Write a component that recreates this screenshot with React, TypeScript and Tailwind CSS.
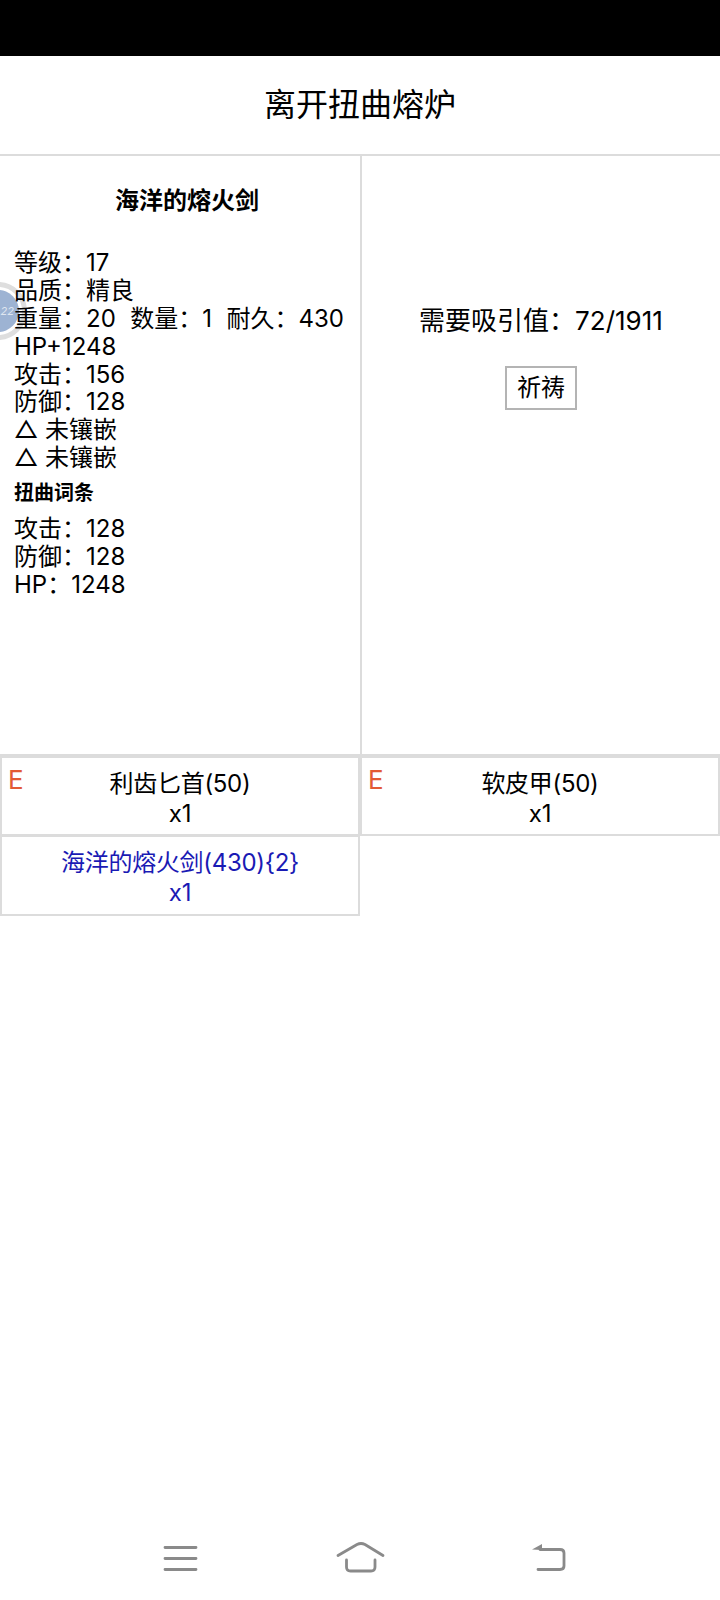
const font = "font-['Inter','Noto_Sans_CJK_SC',sans-serif]";

function Cell({ name, color, e, size }: { name: string; color?: string; e?: boolean; size?: string }) {
  return (
    <div className={`relative border-2 border-[#dcdcdc] text-center text-[24px] tracking-[-0.3px] leading-[30px] pt-[11px] ${size ?? "h-20"} ${color ?? "text-black"}`}>
      {e && <span className="absolute left-[6px] top-[7px] text-[26px] text-[#e25a35]">E</span>}
      <div>{name}</div>
      <div>x1</div>
    </div>
  );
}

function NavBar() {
  return (
    <div className="mt-auto h-20 flex items-start pt-[20px] text-[#8a8a8a]">
      <svg className="ml-[160px]" width="40" height="36" viewBox="160 1540 40 36" fill="none" stroke="currentColor" strokeWidth="2.8" strokeLinecap="round">
        <path d="M165 1547.5H196M165 1558.5H196M165 1569.5H196" />
      </svg>
      <svg className="ml-[135px]" width="54" height="36" viewBox="335 1540 54 36" fill="none" stroke="currentColor" strokeWidth="2.8" strokeLinecap="round" strokeLinejoin="round">
        <path d="M338 1555.5L357 1544.5Q361 1542.5 365 1544.5L383 1555.5" />
        <path d="M346.5 1560V1567Q346.5 1571 350.5 1571H371Q375 1571 375 1567V1560" />
      </svg>
      <svg className="ml-[141px]" width="40" height="36" viewBox="530 1540 40 36" fill="none" stroke="currentColor" strokeWidth="2.8" strokeLinecap="round" strokeLinejoin="round">
        <path d="M540 1549.5H560Q564 1549.5 564 1553V1566Q564 1569.5 560 1569.5H538" />
        <path d="M532 1549.5L542 1544V1550Z" fill="currentColor" stroke="none" />
      </svg>
    </div>
  );
}

export default function App() {
  return (
    <div className={`relative w-[720px] h-[1600px] bg-white overflow-hidden text-black flex flex-col ${font}`}>
      <div className="absolute left-[-31px] top-[282px] w-[58px] h-[58px] rounded-full border-[5px] border-[#dedede] bg-white p-[3px]">
        <div className="w-full h-full rounded-full bg-[#9db3d3] flex items-center justify-end pr-[5px] text-[#dfe6f0] text-[11px] italic">22</div>
      </div>
      <div className="h-14 bg-black shrink-0" />
      <div className="relative h-[100px] shrink-0 flex items-center justify-center text-[32px] border-b-2 border-[#dcdcdc]">离开扭曲熔炉</div>
      <div className="relative flex h-[600px] shrink-0 border-b-2 border-[#dcdcdc]">
        <div className="w-[362px] border-r-2 border-[#dcdcdc] pl-[14px] text-[24px] leading-[27.9px]">
          <div className="text-center font-bold pt-[31px] pb-[34px]">海洋的熔火剑</div>
          <div>等级：17</div>
          <div>品质：精良</div>
          <div className="whitespace-nowrap [word-spacing:0.5px]">重量：20&nbsp;&nbsp;数量：1&nbsp;&nbsp;耐久：430</div>
          <div>HP+1248</div>
          <div>攻击：156</div>
          <div>防御：128</div>
          <div>△ 未镶嵌</div>
          <div>△ 未镶嵌</div>
          <div className="font-bold text-[20px] leading-6 mt-[9px] mb-[10px]">扭曲词条</div>
          <div>攻击：128</div>
          <div>防御：128</div>
          <div>HP：1248</div>
        </div>
        <div className="flex-1 flex flex-col items-center pt-[147px]">
          <div className="text-[26px] leading-9">需要吸引值：72/1911</div>
          <button className="mt-[27px] border-2 border-[#b4b4b4] w-[72px] h-[44px] text-[24px]">祈祷</button>
        </div>
      </div>
      <div className="relative grid grid-cols-2 w-[720px] shrink-0">
        <Cell name="利齿匕首(50)" e />
        <Cell name="软皮甲(50)" e />
        <Cell name="海洋的熔火剑(430){2}" color="text-[#1a1ab4]" size="h-[81px] -mt-px" />
      </div>
      <NavBar />
    </div>
  );
}
